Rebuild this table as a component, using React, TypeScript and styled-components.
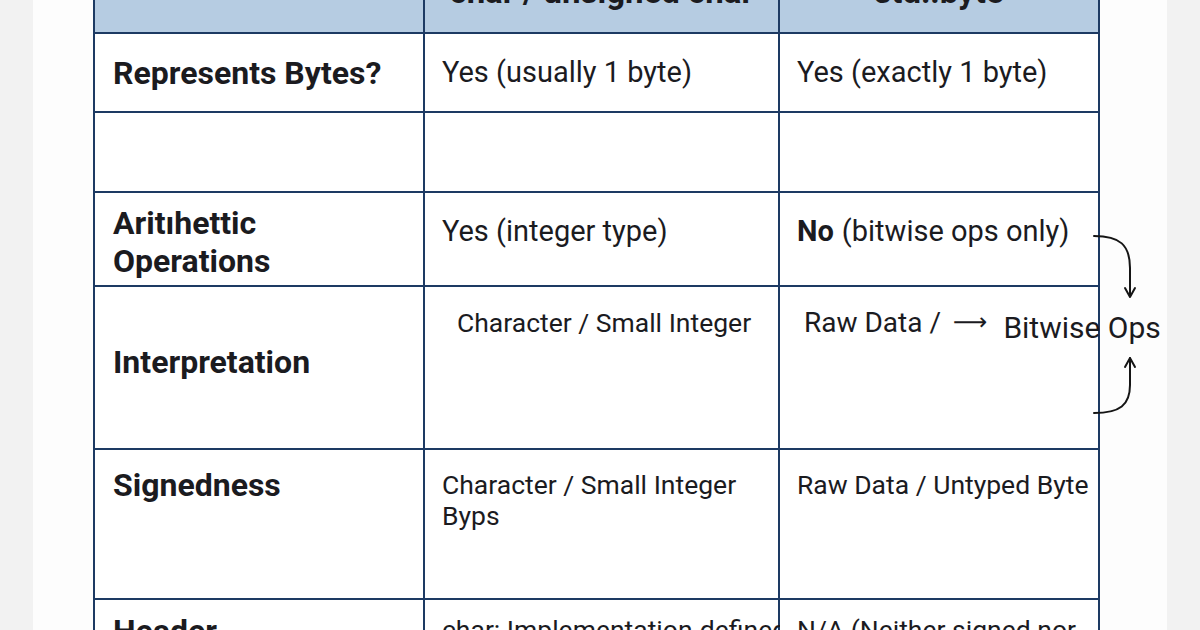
import React from "react";
import styled, { createGlobalStyle } from "styled-components";

const navy = "#1d3a63";
const ink = "#1b1b1f";

const GlobalStyle = createGlobalStyle`
  html, body {
    margin: 0;
    height: 630px;
    overflow: hidden;
    background: #f2f2f2;
    font-family: Roboto, "Liberation Sans", sans-serif;
    color: ${ink};
  }
`;

const Page = styled.div`
  width: 1134px;
  height: 630px;
  margin: 0 auto;
  background: #fdfdfd;
  overflow: hidden;
`;

const TableWrap = styled.div`
  position: relative;
  width: 1007px;
  margin: -32px 0 0 60px;
`;

const Grid = styled.div`
  display: grid;
  grid-template-columns: 328px 353px 318px;
  grid-template-rows: 62px 77px 78px 92px 161px 148px 120px;
  gap: 2px;
  background: ${navy};
  border: 2px solid ${navy};
`;

const HeadCell = styled.div`
  display: flex;
  align-items: flex-end;
  justify-content: center;
  padding-bottom: 20px;
  background: #b6cce2;
  font-size: 33px;
  line-height: 1.2;
  font-weight: 700;
  white-space: nowrap;
`;

type CellProps = {
  $center?: boolean;
  $top?: number;
  $bottom?: number;
  $indent?: number;
  $bold?: boolean;
  $size?: number;
};

const Cell = styled.div<CellProps>`
  display: flex;
  flex-direction: column;
  justify-content: ${(p) => (p.$center ? "center" : "flex-start")};
  padding: ${(p) => p.$top ?? 0}px 0 ${(p) => p.$bottom ?? 0}px ${(p) => p.$indent ?? 17}px;
  background: #fff;
  font-size: ${(p) => p.$size ?? (p.$bold ? 32 : 26.5)}px;
  line-height: ${(p) => (p.$bold ? "38px" : "31px")};
  font-weight: ${(p) => (p.$bold ? 700 : 400)};
  min-width: 0;
`;

const Line = styled.span`
  display: flex;
  align-items: flex-start;
  white-space: nowrap;
`;

const Strong = styled.b`
  font-weight: 700;
  margin-right: 8px;
`;

const LongArrow = styled.span`
  font-family: "DejaVu Sans", sans-serif;
  font-size: 24px;
  margin-left: 12px;
`;

const Flow = styled.span`
  margin-left: 16px;
  padding-top: 5px;
  font-size: 30px;
`;

const Arrows = styled.svg`
  position: absolute;
  left: 995px;
  top: 260px;
  overflow: visible;
`;

const FlowArrows = () => (
  <Arrows width="60" height="195" viewBox="0 0 60 195" fill="none" stroke="#151515" strokeWidth="2" strokeLinecap="round" strokeLinejoin="round">
    <path d="M6 8 C32 8 42 17 42 40 L42 68" />
    <path d="M37 60 L42 69 L47 60" />
    <path d="M6 185 C32 185 42 177 42 157 L42 130" />
    <path d="M37 139 L42 130 L47 139" />
  </Arrows>
);

const App = () => (
  <>
    <GlobalStyle />
    <Page>
      <TableWrap>
        <Grid>
          <HeadCell />
          <HeadCell>char / unsigned char</HeadCell>
          <HeadCell>std::byte</HeadCell>

          <Cell $bold $center $indent={18}>
            <Line>Represents Bytes?</Line>
          </Cell>
          <Cell $center $size={29}>
            <Line>Yes (usually 1 byte)</Line>
          </Cell>
          <Cell $center $size={29}>
            <Line>Yes (exactly 1 byte)</Line>
          </Cell>

          <Cell />
          <Cell />
          <Cell />

          <Cell $bold $center $top={6} $indent={18}>
            <Line>Aritıhettic</Line>
            <Line>Operations</Line>
          </Cell>
          <Cell $top={23} $size={29}>
            <Line>Yes (integer type)</Line>
          </Cell>
          <Cell $top={23} $size={29}>
            <Line>
              <Strong>No</Strong>(bitwise ops only)
            </Line>
          </Cell>

          <Cell $bold $center $bottom={12} $indent={18}>
            <Line>Interpretation</Line>
          </Cell>
          <Cell $top={20} $indent={32}>
            <Line>Character / Small Integer</Line>
          </Cell>
          <Cell $top={20} $indent={24} $size={28}>
            <Line>
              Raw Data /<LongArrow>⟶</LongArrow>
              <Flow>Bitwise Ops</Flow>
            </Line>
          </Cell>

          <Cell $bold $top={16} $indent={18}>
            <Line>Signedness</Line>
          </Cell>
          <Cell $top={19}>
            <Line>Character / Small Integer</Line>
            <Line>Byps</Line>
          </Cell>
          <Cell $top={19}>
            <Line>Raw Data / Untyped Byte</Line>
          </Cell>

          <Cell $bold $top={12} $indent={18}>
            <Line>Header</Line>
          </Cell>
          <Cell $top={14}>
            <Line>char: Implementation-defined;</Line>
          </Cell>
          <Cell $top={14}>
            <Line>N/A (Neither signed nor</Line>
          </Cell>
        </Grid>
        <FlowArrows />
      </TableWrap>
    </Page>
  </>
);

export default App;
